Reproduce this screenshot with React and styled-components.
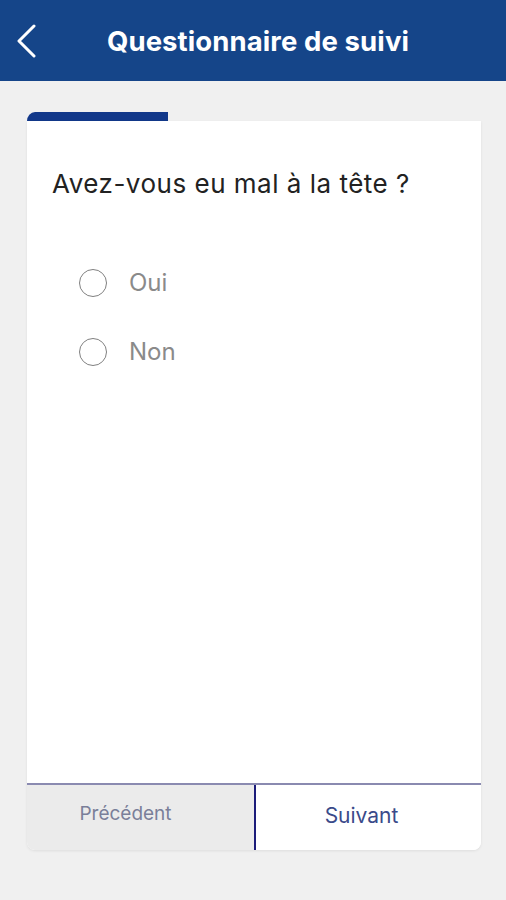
import React, { useState } from "react";
import styled, { createGlobalStyle } from "styled-components";

const GlobalStyle = createGlobalStyle`
  html, body {
    margin: 0;
    padding: 0;
    background: #f0f0f0;
    font-family: Inter, "Noto Sans", Roboto, sans-serif;
  }
  * { box-sizing: border-box; }
`;

const Page = styled.div`
  width: 506px;
  height: 900px;
  background: #f0f0f0;
  display: flex;
  flex-direction: column;
`;

const Header = styled.header`
  height: 81px;
  background: #154589;
  display: flex;
  align-items: center;
  justify-content: center;
  position: relative;
  flex-shrink: 0;
`;

const BackButton = styled.button`
  position: absolute;
  left: 11px;
  top: 22px;
  width: 30px;
  height: 38px;
  border: none;
  background: none;
  padding: 0;
  cursor: pointer;
  display: flex;
  align-items: center;
  justify-content: center;
`;

const Title = styled.h1`
  margin: 0;
  color: #fff;
  font-size: 27.5px;
  font-weight: 700;
  letter-spacing: 0.1px;
  padding-left: 10px;
`;

const Main = styled.main`
  padding: 31px 25px 0 27px;
  display: flex;
  flex-direction: column;
`;

const Progress = styled.div`
  width: 141px;
  height: 9px;
  background: #12388a;
  border-top-left-radius: 8px 9px;
`;

const Card = styled.section`
  height: 729px;
  background: #fff;
  border-radius: 0 0 8px 8px;
  box-shadow: 0 1px 3px rgba(0, 0, 0, 0.08);
  display: flex;
  flex-direction: column;
`;

const Body = styled.div`
  flex: 1;
  padding: 47px 25px 0 25px;
`;

const Question = styled.h2`
  margin: 0 0 68px;
  font-size: 26px;
  font-weight: 400;
  line-height: 32px;
  letter-spacing: 0.5px;
  color: #222;
`;

const Options = styled.div`
  display: flex;
  flex-direction: column;
  gap: 40px;
  padding-left: 27px;
`;

const Option = styled.label`
  display: flex;
  align-items: center;
  gap: 22px;
  cursor: pointer;
`;

const Radio = styled.span`
  width: 28px;
  height: 28px;
  border-radius: 50%;
  border: 1.5px solid #808080;
  display: flex;
  align-items: center;
  justify-content: center;
  &::after {
    content: "";
    width: 14px;
    height: 14px;
    border-radius: 50%;
    background: ${p => (p.$checked ? "#154589" : "transparent")};
  }
`;

const Label = styled.span`
  font-size: 24px;
  color: #8a8a8a;
`;

const Footer = styled.div`
  display: flex;
  border-top: 2px solid #8a8ab0;
  height: 67px;
`;

const NavButton = styled.button`
  flex: ${p => (p.$muted ? "0 0 227px" : "1 1 0")};
  border: none;
  margin: 0;
  font-family: inherit;
  background: ${p => (p.$muted ? "#ebebeb" : "#fff")};
  color: ${p => (p.$muted ? "#7a7f99" : "#3a4a8a")};
  font-size: ${p => (p.$muted ? "19px" : "21px")};
  border-bottom-left-radius: ${p => (p.$muted ? "8px" : "0")};
  border-bottom-right-radius: ${p => (p.$muted ? "0" : "8px")};
  border-left: ${p => (p.$muted ? "none" : "2px solid #1c1c7a")};
  padding: 0 ${p => (p.$muted ? "30px" : "14px")} ${p => (p.$muted ? "8px" : "4px")} 0;
  cursor: pointer;
`;

export default () => {
  const [answer, setAnswer] = useState(null);

  return (
    <Page>
      <GlobalStyle />
      <Header>
        <BackButton>
          <svg width="22" height="34" viewBox="0 0 22 34" fill="none">
            <path d="M19 2 L4 17 L19 32" stroke="#fff" strokeWidth="3" strokeLinecap="round" strokeLinejoin="round" />
          </svg>
        </BackButton>
        <Title>Questionnaire de suivi</Title>
      </Header>
      <Main>
        <Progress />
        <Card>
          <Body>
            <Question>Avez-vous eu mal à la tête ?</Question>
            <Options>
              {["Oui", "Non"].map(opt => (
                <Option key={opt} onClick={() => setAnswer(opt)}>
                  <Radio $checked={answer === opt} />
                  <Label>{opt}</Label>
                </Option>
              ))}
            </Options>
          </Body>
          <Footer>
            <NavButton $muted>Précédent</NavButton>
            <NavButton>Suivant</NavButton>
          </Footer>
        </Card>
      </Main>
    </Page>
  );
};
